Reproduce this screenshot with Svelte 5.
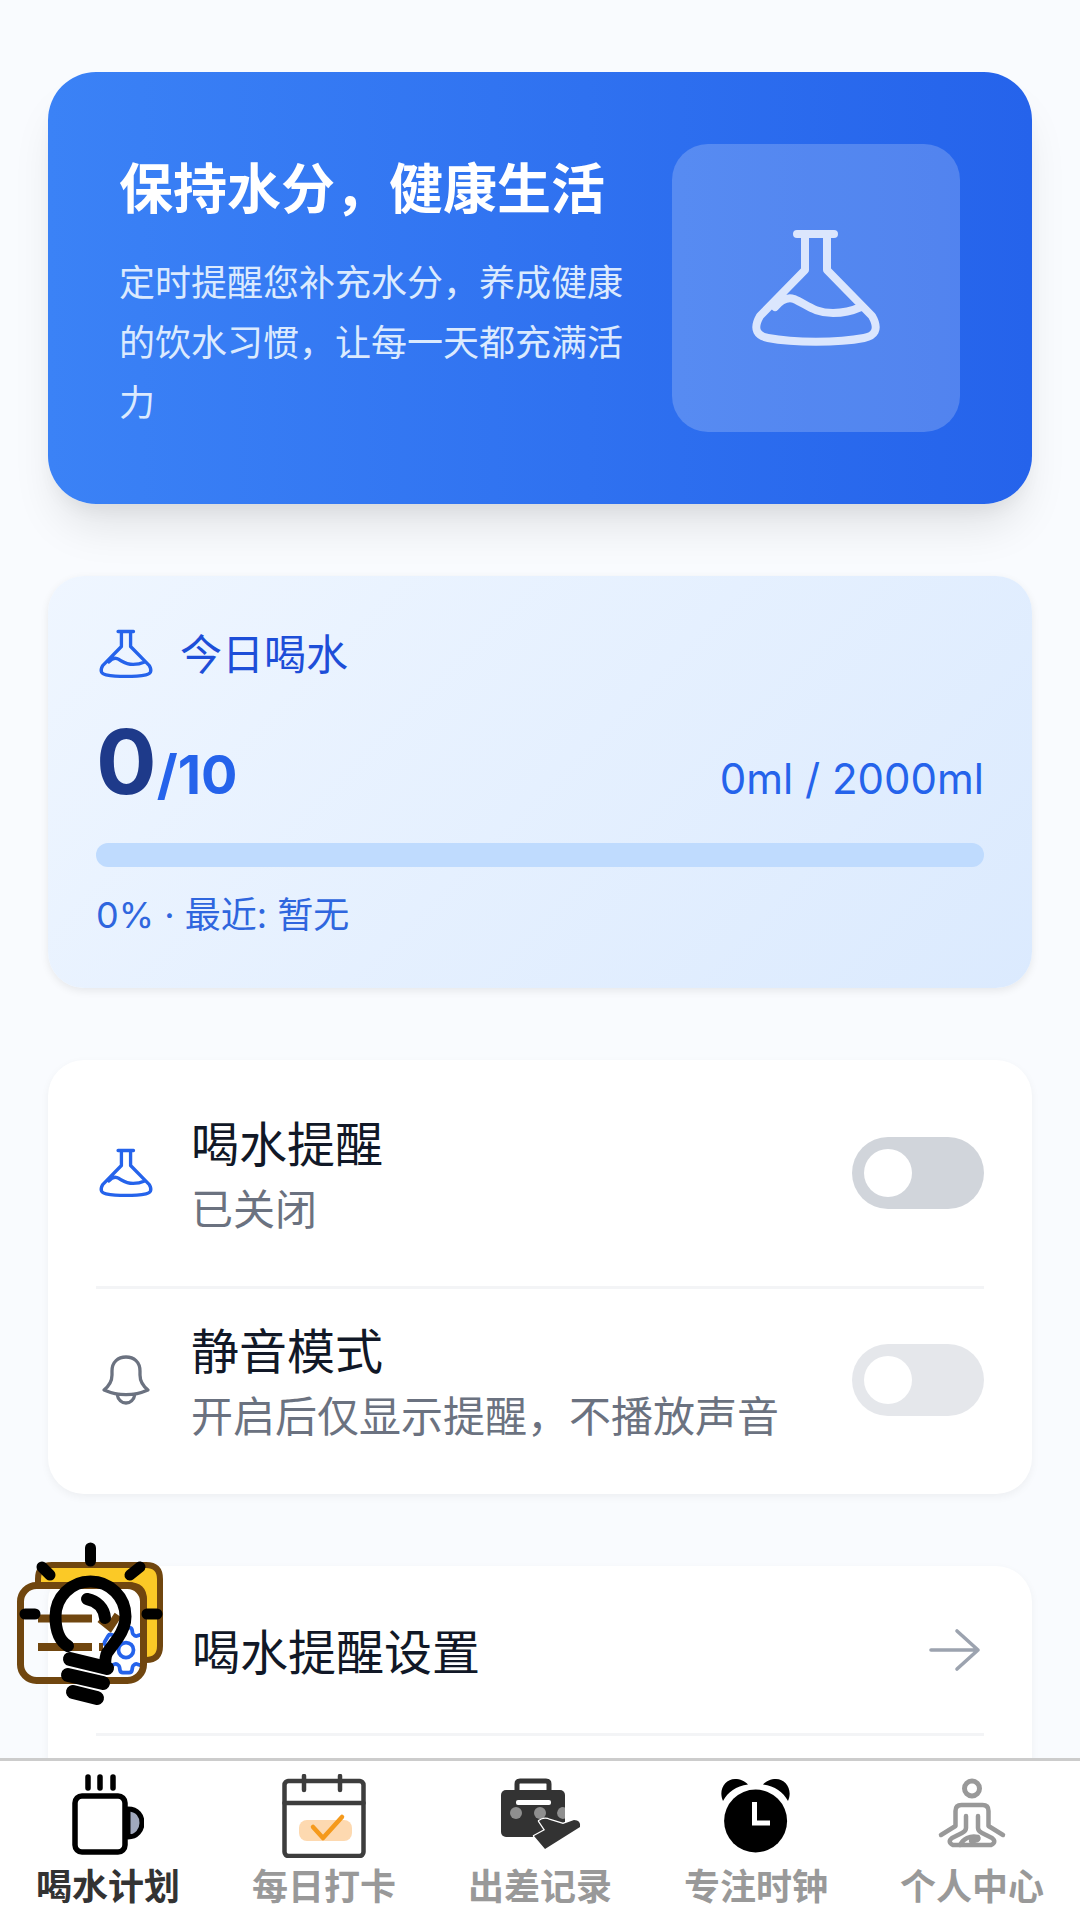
<script>
  const navItems = [
    { label: '喝水计划', icon: 'cup', active: true },
    { label: '每日打卡', icon: 'calendar' },
    { label: '出差记录', icon: 'bag' },
    { label: '专注时钟', icon: 'clock' },
    { label: '个人中心', icon: 'yoga' }
  ];
  // drawn on a 144 box, the small ones just scale it down
  const flask = 'M53 18h37M61 18v36L16 100C8 114 14 120 24 122C50 127 94 127 120 122C130 120 136 114 128 100L83 54V18M31 91C38 83 44 81 50 83C62 88 70 97 89 97C98 97 108 95 117 91';
  const bell = 'M8 40C13 36 16 31 16 25V21C16 12 22 7 30 7C38 7 44 12 44 21V25C44 31 47 36 52 40C38 46 22 46 8 40ZM21 44C22 50 26 53 30 53C34 53 38 50 39 44';
  const gear = 'M9.594 3.94c.09-.542.56-.94 1.11-.94h2.593c.55 0 1.02.398 1.11.94l.213 1.281c.063.374.313.686.645.87.074.04.147.083.22.127.325.196.72.257 1.075.124l1.217-.456a1.125 1.125 0 0 1 1.37.49l1.296 2.247a1.125 1.125 0 0 1-.26 1.431l-1.003.827c-.293.241-.438.613-.43.992a7.723 7.723 0 0 1 0 .255c-.008.378.137.75.43.991l1.004.827c.424.35.534.955.26 1.43l-1.298 2.247a1.125 1.125 0 0 1-1.369.491l-1.217-.456c-.355-.133-.75-.072-1.076.124a6.47 6.47 0 0 1-.22.128c-.331.183-.581.495-.644.869l-.213 1.281c-.09.543-.56.94-1.11.94h-2.594c-.55 0-1.019-.398-1.11-.94l-.213-1.281c-.062-.374-.312-.686-.644-.87a6.52 6.52 0 0 1-.22-.127c-.325-.196-.72-.257-1.076-.124l-1.217.456a1.125 1.125 0 0 1-1.369-.49l-1.297-2.247a1.125 1.125 0 0 1 .26-1.431l1.004-.827c.292-.24.437-.613.43-.991a6.932 6.932 0 0 1 0-.255c.007-.38-.138-.751-.43-.992l-1.004-.827a1.125 1.125 0 0 1-.26-1.43l1.297-2.247a1.125 1.125 0 0 1 1.37-.491l1.216.456c.356.133.751.072 1.076-.124.072-.044.146-.086.22-.128.332-.183.582-.495.644-.869l.214-1.28ZM15 12a3 3 0 1 1-6 0 3 3 0 0 1 6 0Z';
</script>

<div class="page">
  <main class="content">
    <section class="hero">
      <div class="hero-text">
        <h1>保持水分，健康生活</h1>
        <p>定时提醒您补充水分，养成健康的饮水习惯，让每一天都充满活力</p>
      </div>
      <div class="hero-icon">
        <svg viewBox="0 0 144 144" width="144" height="144" fill="none" stroke="#dbe6fd" stroke-width="8" stroke-linecap="round" stroke-linejoin="round"><path d={flask} /></svg>
      </div>
    </section>

    <section class="today">
      <div class="today-head">
        <svg viewBox="0 0 144 144" width="60" height="60" fill="none" stroke="#2563eb" stroke-width="8" stroke-linecap="round" stroke-linejoin="round"><path d={flask} /></svg>
        <span>今日喝水</span>
      </div>
      <div class="today-count">
        <div class="count"><b>0</b><em>/10</em></div>
        <div class="volume">0ml / 2000ml</div>
      </div>
      <div class="bar"></div>
      <div class="today-foot">0% · 最近: 暂无</div>
    </section>

    <section class="card toggles">
      <div class="row first">
        <svg class="row-icon" viewBox="0 0 144 144" width="60" height="60" fill="none" stroke="#2563eb" stroke-width="8" stroke-linecap="round" stroke-linejoin="round"><path d={flask} /></svg>
        <div class="row-text">
          <div class="row-title">喝水提醒</div>
          <div class="row-sub">已关闭</div>
        </div>
        <div class="toggle"><i></i></div>
      </div>
      <div class="row second">
        <svg class="row-icon" viewBox="0 0 60 60" width="60" height="60" fill="none" stroke="#6b7280" stroke-width="3.3" stroke-linecap="round" stroke-linejoin="round"><path d={bell} /></svg>
        <div class="row-text">
          <div class="row-title">静音模式</div>
          <div class="row-sub">开启后仅显示提醒，不播放声音</div>
        </div>
        <div class="toggle light"><i></i></div>
      </div>
    </section>

    <section class="card links">
      <div class="link-row">
        <svg class="row-icon" viewBox="0 0 24 24" width="60" height="60" fill="none" stroke="#2563eb" stroke-width="1.5" stroke-linecap="round" stroke-linejoin="round"><path d={gear} /></svg>
        <div class="link-title">喝水提醒设置</div>
        <svg class="arrow" viewBox="0 0 60 60" width="60" height="60" fill="none" stroke="#9ca3af" stroke-width="3.6" stroke-linecap="round" stroke-linejoin="round"><path d="M7 30h47M33 11l21 19-21 19" /></svg>
      </div>
      <div class="link-row divided"></div>
    </section>
  </main>

  <!-- floating helper badge, sits over the settings card -->
  <svg class="tips" viewBox="0 0 180 180" width="180" height="180" fill="none" stroke-linecap="round" stroke-linejoin="round">
    <path d="M38 55V49Q38 35 52 35H146Q160 35 160 49V116Q160 130 146 130H144V70Q144 55 128 55Z" fill="#fbc926" stroke="#70460f" stroke-width="6" />
    <rect x="20.5" y="55.5" width="123" height="95" rx="16" stroke="#70460f" stroke-width="7" />
    <path d="M38 88.5H92M38 117H92M99 117H103M100 89L110 97L118 85" stroke="#70460f" stroke-width="8" stroke-linecap="butt" stroke-linejoin="miter" />
    <g stroke="#000">
      <path d="M90.5 18V31M42 37L50 45M140 37L130 45M25 84H35M147 84H157" stroke-width="11" />
      <path d="M68 116C58 110 55.5 98 55.5 86.5C55.5 67 71 51.5 90.5 51.5S125.5 67 125.5 86.5C125.5 95 122 102 118 108L107 123C105 127 105 131 105 138" stroke-width="12" />
      <path d="M87 69C97 71 104 78 105 88" stroke-width="12" />
      <path d="M70 129L107 138M68 145L103 153M73 162L97 168" stroke-width="14" />
    </g>
  </svg>

  <nav class="tabbar">
    {#each navItems as item}
      <div class="tab" class:active={item.active}>
        <div class="tab-icon">
          {#if item.icon === 'cup'}
            <svg viewBox="0 0 72 84" width="72" height="84" fill="none" stroke="#000" stroke-linecap="round" stroke-linejoin="round">
              <path d="M56 35c10 0 14 7 14 14s-5 14-14 14Z" fill="#a0a8bc" stroke-width="5" />
              <rect x="3" y="22" width="50" height="56" rx="7" fill="#fff" stroke-width="5.5" />
              <path d="M16 3v11M28 3v11M41 3v11" stroke-width="5.5" />
            </svg>
          {:else if item.icon === 'calendar'}
            <svg viewBox="0 0 84 84" width="84" height="84" fill="none" stroke="#3d3d3d" stroke-width="4.5" stroke-linecap="round" stroke-linejoin="round">
              <rect x="2.5" y="7" width="79" height="75" rx="4" />
              <path d="M2.5 29h79M22 2v14M58 2v14" />
              <rect x="17" y="46" width="53" height="21" rx="8" fill="#fdd9b0" stroke="none" />
              <path d="M31 53l10 11 19-21" stroke="#f59a1c" stroke-width="4.5" />
            </svg>
          {:else if item.icon === 'bag'}
            <svg viewBox="0 0 84 84" width="84" height="84" fill="none">
              <path d="M19 17V10Q19 7 22 7H48Q51 7 51 10V17" stroke="#333" stroke-width="5" />
              <rect x="3" y="16" width="64" height="47" rx="5" fill="#333" />
              <rect x="18" y="26" width="35" height="5" rx="2" fill="#fff" />
              <circle cx="18" cy="39" r="6" fill="#8f8f8f" />
              <circle cx="42" cy="39" r="6" fill="#8f8f8f" />
              <path d="M59 39a6 6 0 0 1 8-5.5V44.5a6 6 0 0 1-8-5.5Z" fill="#8f8f8f" />
              <path d="M36 62L47 56L41 47Q46 43 52 46L65 50L76 46Q83 46 82 53L47 75Z" fill="#333" stroke="#fff" stroke-width="2.5" stroke-linejoin="round" paint-order="stroke" />
            </svg>
          {:else if item.icon === 'clock'}
            <svg viewBox="0 0 84 84" width="84" height="84">
              <circle cx="41.6" cy="47" r="31.5" fill="#000" />
              <path d="M9 27C4 16 11 5 21 5C26 5 31 7 34 10.5C22 12 14 18 9 27ZM74 27C79 16 72 5 62 5C57 5 52 7 49 10.5C61 12 69 18 74 27Z" fill="#000" />
              <path d="M40.5 28V49H56" fill="none" stroke="#fff" stroke-width="5" />
            </svg>
          {:else}
            <svg viewBox="0 0 84 84" width="84" height="84" fill="none" stroke="#999" stroke-width="4.5" stroke-linecap="round" stroke-linejoin="round">
              <circle cx="42" cy="14.5" r="7.5" stroke-width="5" />
              <path d="M11 61L25.5 52V37Q25.5 31 31.5 31H52.5Q58.5 31 58.5 37V52L73 61" />
              <path d="M36 42V54Q36 57 32 59L22 64Q17 68 23 71H61Q67 68 62 64L52 59Q48 57 48 54V42" />
              <path d="M30 71C33 65 40 61 48 63C50 66 46 67 41 67" />
            </svg>
          {/if}
        </div>
        <div class="tab-label">{item.label}</div>
      </div>
    {/each}
  </nav>
</div>

<style>
  :global(body) {
    margin: 0;
    background: #f9fbfe;
  }

  .page {
    position: relative;
    width: 1080px;
    height: 1920px;
    overflow: hidden;
    font-family: Inter, "Noto Sans CJK SC", sans-serif;
    background: #f9fbfe;
  }

  .content {
    display: flex;
    flex-direction: column;
    gap: 72px;
    padding: 72px 48px 0;
  }

  .hero {
    display: flex;
    align-items: center;
    justify-content: space-between;
    height: 432px;
    padding: 0 72px;
    box-sizing: border-box;
    border-radius: 48px;
    background: linear-gradient(to right, #3b82f6, #2563eb);
    box-shadow: 0 30px 45px -9px rgba(0, 0, 0, 0.1), 0 12px 18px -6px rgba(0, 0, 0, 0.05);
  }

  .hero-text {
    width: 510px;
    margin-left: -1px;
    padding-top: 11px;
    color: #fff;
  }

  h1 {
    margin: 0 0 27px;
    font-size: 54px;
    line-height: 72px;
    font-weight: 700;
  }

  .hero-text p {
    margin: 0;
    font-size: 36px;
    line-height: 60px;
    color: #dbeafe;
  }

  .hero-icon {
    flex: none;
    display: flex;
    align-items: center;
    justify-content: center;
    width: 288px;
    height: 288px;
    border-radius: 36px;
    background: rgba(255, 255, 255, 0.2);
  }

  .today {
    height: 412px;
    padding: 48px;
    box-sizing: border-box;
    border-radius: 36px;
    background: linear-gradient(135deg, #eff6ff, #dbeafe);
    box-shadow: 0 3px 9px rgba(0, 0, 0, 0.08);
  }

  .today-head {
    display: flex;
    align-items: center;
    gap: 24px;
    height: 60px;
    font-size: 42px;
    color: #1d4ed8;
  }

  .today-head span {
    margin-bottom: 6px;
  }

  .today-count {
    display: flex;
    align-items: baseline;
    justify-content: space-between;
    margin-top: 24px;
  }

  .count b {
    font-size: 90px;
    line-height: 108px;
    font-weight: 700;
    color: #1e3a8a;
  }

  .count em {
    font-style: normal;
    font-size: 54px;
    font-weight: 700;
    color: #2563eb;
  }

  .volume {
    font-size: 42px;
    color: #2563eb;
  }

  .bar {
    height: 24px;
    margin-top: 27px;
    border-radius: 12px;
    background: #bfdbfe;
  }

  .today-foot {
    margin-top: 24px;
    font-size: 36px;
    line-height: 48px;
    color: #2f66de;
  }

  .card {
    padding: 0 48px;
    border-radius: 36px;
    background: #fff;
    box-shadow: 0 3px 9px rgba(0, 0, 0, 0.05);
  }

  .toggles {
    padding: 48px 48px 49px;
  }

  .row {
    display: flex;
    align-items: center;
    height: 130px;
  }

  .row.first {
    height: 181px;
    padding-bottom: 48px;
    box-sizing: border-box;
    border-bottom: 3px solid #f3f4f6;
  }

  .row.second {
    margin-top: 26px;
  }

  .divided {
    border-top: 3px solid #f3f4f6;
  }

  .row-icon {
    flex: none;
    margin-right: 36px;
  }

  .row-text {
    flex: 1;
    margin-left: -1px;
    padding-top: 6px;
  }

  .row-title {
    font-size: 48px;
    line-height: 66px;
    color: #111827;
  }

  .row-sub {
    margin-top: 2px;
    font-size: 42px;
    line-height: 60px;
    color: #6b7280;
  }

  .toggle {
    flex: none;
    position: relative;
    width: 132px;
    height: 72px;
    border-radius: 36px;
    background: #d1d5db;
  }

  .toggle.light {
    background: #e5e7eb;
  }

  .toggle i {
    position: absolute;
    top: 12px;
    left: 12px;
    width: 48px;
    height: 48px;
    border-radius: 50%;
    background: #fff;
  }

  .link-row {
    display: flex;
    align-items: center;
    height: 167px;
  }

  .link-title {
    flex: 1;
    margin-bottom: 2px;
    font-size: 48px;
    color: #111827;
  }

  .tips {
    position: absolute;
    left: 0;
    top: 1530px;
  }

  .tabbar {
    position: absolute;
    left: 0;
    right: 0;
    bottom: 0;
    display: flex;
    height: 162px;
    box-sizing: border-box;
    border-top: 3px solid #ccc;
    background: #fff;
  }

  .tab {
    flex: 1;
    display: flex;
    flex-direction: column;
    align-items: center;
    padding-top: 13px;
  }

  .tab-icon {
    display: flex;
    align-items: flex-end;
    justify-content: center;
    height: 84px;
  }

  .tab-label {
    margin-top: 5px;
    font-size: 36px;
    line-height: 48px;
    font-weight: 700;
    color: #999;
  }

  .tab.active .tab-label {
    color: #333;
  }
</style>
